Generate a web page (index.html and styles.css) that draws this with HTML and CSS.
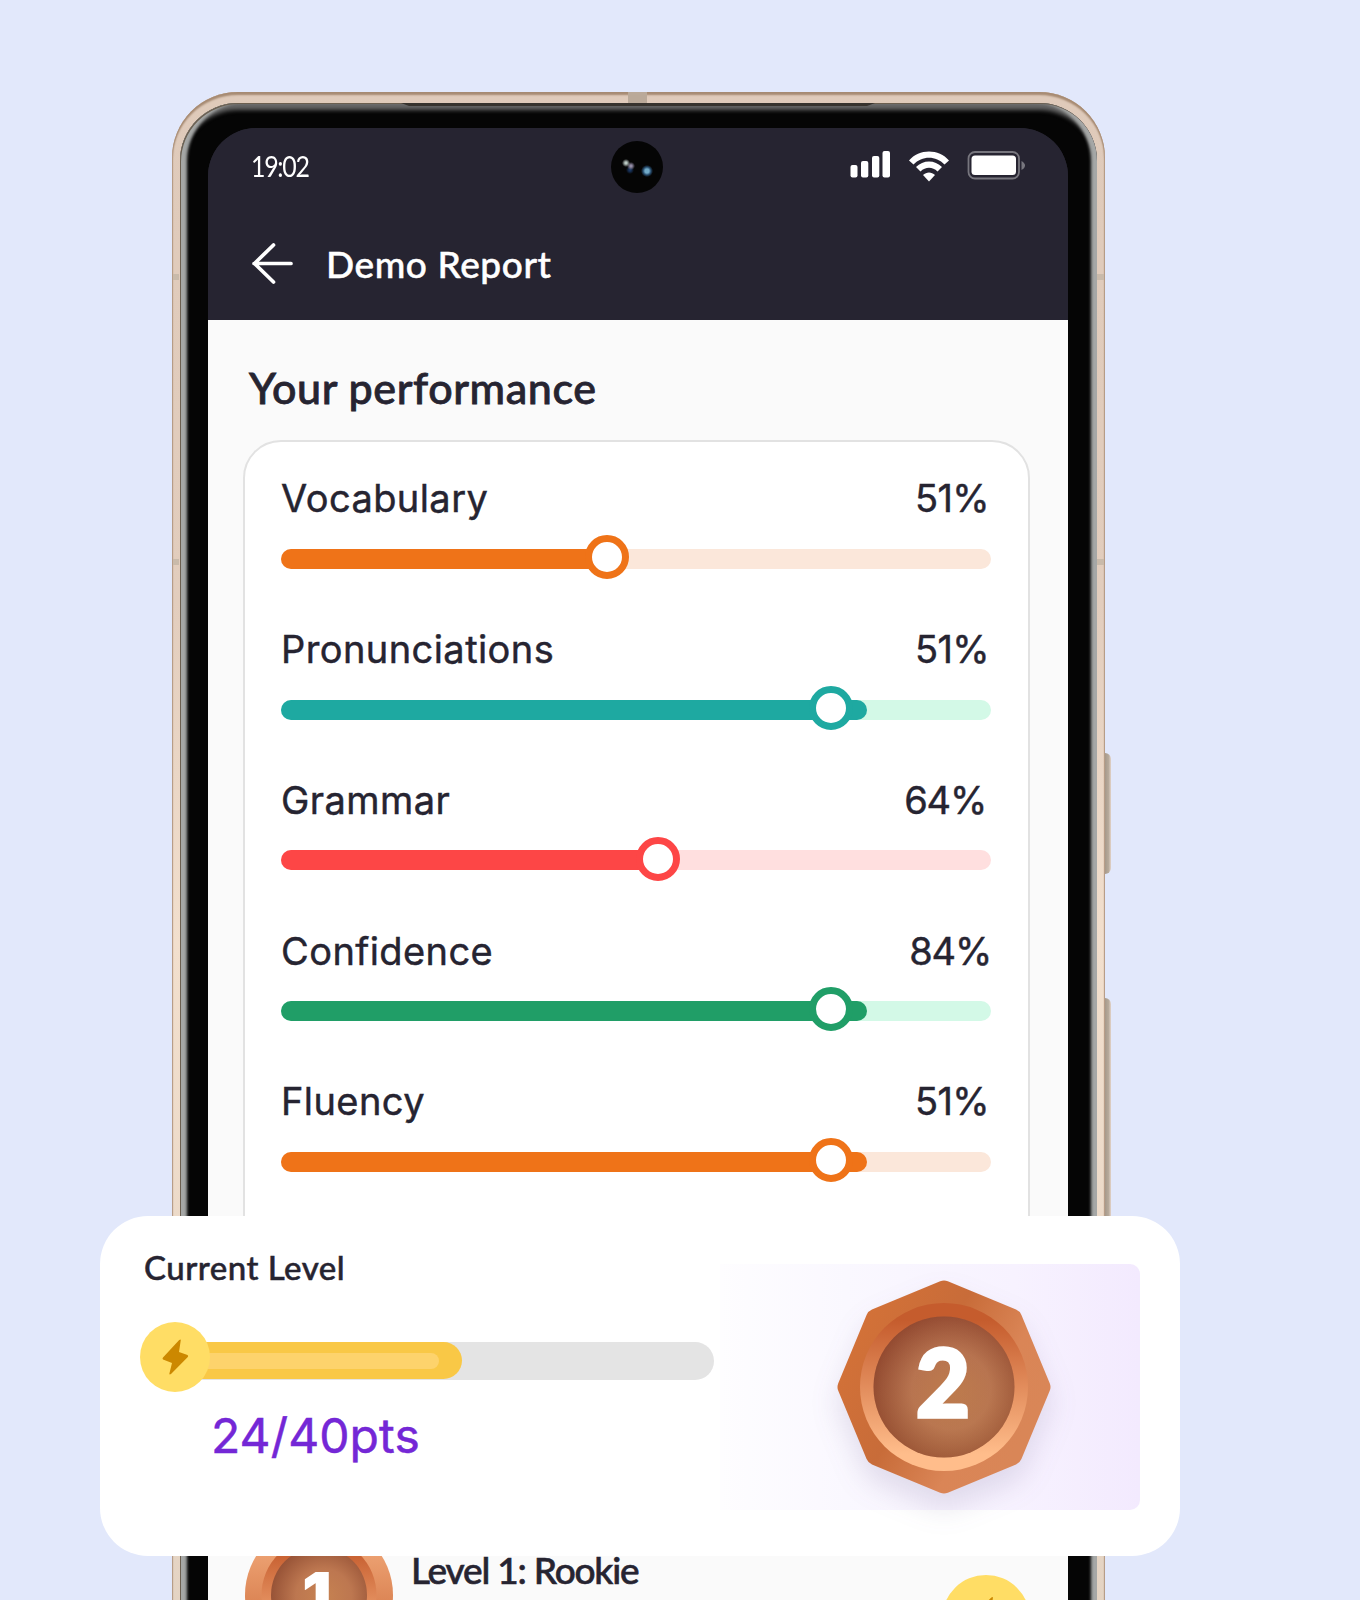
FILE: index.html
```html
<!DOCTYPE html>
<html lang="en">
<head>
<meta charset="utf-8">
<title>Demo Report</title>
<link rel="stylesheet" href="styles.css">
</head>
<body>
<main class="stage">
  <section class="phone">
    <i class="side-key key-a"></i><i class="side-key key-b"></i>
    <i class="seam seam-top"></i>
    <i class="seam seam-l1"></i><i class="seam seam-l2"></i><i class="seam seam-r1"></i><i class="seam seam-r2"></i>
    <div class="bezel">
      <svg class="speaker" viewBox="0 0 474 4"><path d="M0 0H474L466 3H8Z" fill="#37332e"/></svg>
      <div class="screen">
        <header class="top">
          <div class="status">
            <span class="time">19:02</span>
            <svg class="signals" viewBox="0 0 178 36">
              <g fill="#fff">
                <rect x=".5" y="15" width="7" height="12.5" rx="2"/><rect x="11" y="11" width="7.3" height="16.500" rx="2"/><rect x="22" y="6" width="7.300" height="21.500" rx="2"/><rect x="32.500" y="1" width="7.500" height="26.500" rx="2"/>
                <path d="M59 10.500C69-1.500 89-1.500 99 10.500L94.500 14.500C86 5.500 72 5.500 63.500 14.500Z"/>
                <path d="M66 17C73 9.500 85 9.500 92 17L87.500 21.500C82.500 16.500 75.500 16.500 70.500 21.500Z"/>
                <path d="M73 25C76.500 21.500 81.500 21.500 85 25L79 31.500Z"/>
                <rect x="121.500" y="5.500" width="44.500" height="19.500" rx="3.500"/>
              </g>
              <rect x="118.500" y="2" width="50.500" height="26.500" rx="6.500" fill="none" stroke="#77767e" stroke-width="1.800"/>
              <path d="M171.500 11V20Q175 18 175 15.500T171.500 11" fill="#77767e"/>
            </svg>
            <i class="camera"></i>
          </div>
          <div class="title">
            <svg class="back" viewBox="0 0 42 42"><path d="M39 20.500H2M21.500 2L2.500 20.500L21.500 39" fill="none" stroke="#fff" stroke-width="3.700" stroke-linecap="round" stroke-linejoin="round"/></svg>
            <h1>Demo Report</h1>
          </div>
        </header>
        <h2>Your performance</h2>
        <div class="scores">
          <div class="score orange"><div class="line"><span>Vocabulary</span><b>51%</b></div><div class="track"><i class="fill" style="width:326px"></i><i class="knob" style="left:304px"></i></div></div>
          <div class="score teal"><div class="line"><span>Pronunciations</span><b>51%</b></div><div class="track"><i class="fill" style="width:586px"></i><i class="knob" style="left:528px"></i></div></div>
          <div class="score red"><div class="line"><span>Grammar</span><b class="p64">64%</b></div><div class="track"><i class="fill" style="width:377px"></i><i class="knob" style="left:355px"></i></div></div>
          <div class="score green"><div class="line"><span>Confidence</span><b class="p84">84%</b></div><div class="track"><i class="fill" style="width:586px"></i><i class="knob" style="left:528px"></i></div></div>
          <div class="score orange"><div class="line"><span>Fluency</span><b>51%</b></div><div class="track"><i class="fill" style="width:586px"></i><i class="knob" style="left:528px"></i></div></div>
        </div>
        <div class="level-row">
          <svg class="medal-one" viewBox="0 0 150 150">
            <defs>
              <linearGradient id="o1" x2="0" y2="1"><stop stop-color="#f7b384"/><stop offset=".55" stop-color="#dc8555"/></linearGradient>
              <linearGradient id="o2" x2="0" y2="1"><stop offset=".1" stop-color="#c55c2d"/><stop offset="1" stop-color="#ffbd8b"/></linearGradient>
              <radialGradient id="o3" cx=".55" cy=".52" r=".58"><stop stop-color="#c68251"/><stop offset=".5" stop-color="#bd7750"/><stop offset="1" stop-color="#934f34"/></radialGradient>
            </defs>
            <circle cx="75" cy="75" r="74" fill="url(#o1)"/><circle cx="75" cy="75" r="57.500" fill="url(#o2)"/><circle cx="75" cy="75" r="48" fill="url(#o3)"/>
            <text x="73" y="100" text-anchor="middle" class="digit-one">1</text>
          </svg>
          <span class="level-name">Level 1: Rookie</span>
          <svg class="coin" viewBox="0 0 70 70"><circle cx="35" cy="35" r="35" fill="#ffdd65"/><path d="M40.500 18L39 30L48 33Q49 34 48 35L31 52Q30 53 30 52L32 41L23 37.500Q22 36.500 23 35.500L39 18Q40.500 17 40.500 18Z" fill="#cc8800"/></svg>
        </div>
      </div>
    </div>
  </section>

  <section class="current">
    <div class="progress">
      <h3>Current Level</h3>
      <div class="points-bar">
        <i class="points-fill"></i>
        <svg class="bolt" viewBox="0 0 70 70"><circle cx="35" cy="35" r="35" fill="#ffdd65"/><path d="M40.800 18L39 30L47.500 33Q48.700 34 47.800 35L31 52Q29.200 53 29.400 51.500L32 41L23 37.500Q22 36.500 23 35.500L39.200 18Q40.900 16.800 40.800 18Z" fill="#cc8800"/></svg>
      </div>
      <div class="points">24/40pts</div>
    </div>
    <div class="panel">
      <svg class="medal" viewBox="0 0 214 214">
        <defs>
          <linearGradient id="m1" gradientUnits="userSpaceOnUse" x1="20" y1="55" x2="190" y2="150"><stop stop-color="#d27138"/><stop offset=".4" stop-color="#c86c39"/><stop offset=".75" stop-color="#da8556"/><stop offset="1" stop-color="#d98657"/></linearGradient>
          <linearGradient id="m2" x2="0" y2="1"><stop offset=".1" stop-color="#c55c2d"/><stop offset=".9" stop-color="#ffbd8b"/></linearGradient>
          <radialGradient id="m3" cx=".55" cy=".52" r=".62"><stop stop-color="#c98654"/><stop offset=".45" stop-color="#c27e58"/><stop offset="1" stop-color="#8a4028"/></radialGradient>
          <linearGradient id="m4" x2=".3" y2="1"><stop stop-color="#83382a" stop-opacity=".2"/><stop offset="1" stop-color="#a4683a" stop-opacity=".25"/></linearGradient>
        </defs>
        <path d="M107 10.500L175.200 38.800L203.500 107L175.200 175.200L107 203.500L38.800 175.200L10.500 107L38.800 38.800Z" fill="url(#m1)" stroke="url(#m1)" stroke-width="20" stroke-linejoin="round"/>
        <circle cx="107" cy="107" r="84" fill="url(#m2)"/><circle cx="107" cy="107" r="70.500" fill="url(#m3)"/><circle cx="107" cy="107" r="70.500" fill="url(#m4)"/>
        <text x="106" y="136.500" text-anchor="middle" class="digit-two">2</text>
      </svg>
    </div>
  </section>
</main>
</body>
</html>
```
FILE: styles.css
```css
* { box-sizing: border-box; }
body { margin: 0; background: #e2e8fb; font-family: Inter, sans-serif; color: #262431; }
h1, h2, h3 { margin: 0; font-family: Lato, sans-serif; font-weight: 500; white-space: nowrap; }
.stage { position: relative; width: 1360px; height: 1600px; overflow: hidden; padding: 92px 0 0 172px; }
.phone { position: relative; width: 933px; height: 1700px; padding: 11px 8px 0; border-radius: 66px 66px 0 0; background: linear-gradient(#dfcaba, #e2cdbd 30%, #f2dfcd 50%, #e0d0c0); box-shadow: inset 0 3px 2px #a68a72, inset 1px 0 1px #b89f8a, inset -1px 0 1px #b89f8a; }
.bezel { position: relative; height: 1690px; padding: 25px 28px 0; border-radius: 58px 58px 0 0; background: #050505; box-shadow: inset 1px 1px 0 #6b5f50, inset 8px 0 3px -1px #a5a7a6, inset -7px 0 3px -1px #a5a7a6, inset 0 7px 4px #666; }
.speaker { position: absolute; top: 0; left: 221px; width: 474px; height: 4px; }
.screen { width: 860px; height: 1600px; overflow: hidden; border-radius: 48px 48px 0 0; background: linear-gradient(#262431 100px, #fafafa 100px); }
.seam { position: absolute; background: #c9baaa; }
.seam-top { left: 456px; top: 0; width: 19px; height: 11px; background: #baa999; }
.seam-l1, .seam-l2 { left: 1px; width: 6px; height: 6px; }
.seam-r1, .seam-r2 { right: 1px; width: 7px; height: 6px; }
.seam-l1, .seam-r1 { top: 182px; }
.seam-l2, .seam-r2 { top: 467px; }
.side-key { position: absolute; left: 933px; width: 6px; border-radius: 0 6px 6px 0; background: linear-gradient(90deg, #a6998b, #b7aa9b 60%, #e4d4c9); }
.key-a { top: 661px; height: 121px; }
.key-b { top: 906px; height: 260px; }

.top { height: 192px; background: #262431; }
.status { position: relative; display: flex; justify-content: space-between; padding: 22px 40px 0 43px; height: 104px; color: #fff; }
.time { font: 400 29px/32px Lato, sans-serif; letter-spacing: -1.500px; transform: scaleX(.86); transform-origin: 0 0; }
.signals { width: 178px; height: 36px; }
.camera { position: absolute; left: 403px; top: 13px; width: 52px; height: 52px; border-radius: 50%; background: radial-gradient(circle at 36px 30px, #72abc9 0 2px, #244869 4px, transparent 6px), radial-gradient(circle at 15px 22px, #bac8c3 0 1px, transparent 4px), radial-gradient(circle at 20px 25px, #928ba5 0 1px, transparent 4px), radial-gradient(circle at 19px 29px, #19355f 0 1px, transparent 4px), #050505; }
.title { display: flex; align-items: center; gap: 32px; padding-left: 44px; height: 64px; }
.back { width: 42px; height: 42px; }
h1 { font-size: 37px; line-height: 48px; color: #fff; letter-spacing: .6px; -webkit-text-stroke: .5px; }
h2 { padding: 41px 0 0 41px; height: 120px; font-size: 43px; line-height: 54px; letter-spacing: .6px; -webkit-text-stroke: .8px; }

.scores { width: 787px; height: 1000px; margin-left: 35px; padding: 32.250px 36px; border: 2px solid #e2e2e2; border-radius: 38px; background: #fff; }
.score { height: 150.75px; }
.line { display: flex; justify-content: space-between; width: 710px; height: 74.500px; line-height: 48px; font-size: 38px; letter-spacing: .42px; -webkit-text-stroke: .45px; }
.line b { font-weight: 400; padding-right: 2px; letter-spacing: -.6px; }
.line .p64 { padding-right: 5px; letter-spacing: -1.200px; }
.line .p84 { padding-right: 0; letter-spacing: -1.200px; }
.track { position: relative; width: 710px; height: 20px; border-radius: 10px; background: var(--pale); }
.fill { display: block; height: 20px; border-radius: 10px; background: var(--tone); }
.knob { position: absolute; top: -13.750px; width: 44px; height: 44px; border: 7.300px solid var(--tone); border-radius: 50%; background: #fff; }
.orange { --tone: #ef7318; --pale: #fbe7da; }
.teal { --tone: #1ea9a1; --pale: #d3f9e7; }
.red { --tone: #fd4646; --pale: #ffdfdf; }
.green { --tone: #209e67; --pale: #d3f9e7; }

.level-row { display: flex; align-items: flex-start; padding: 80px 38px 0 36px; }
.medal-one { width: 150px; height: 150px; }
.level-name { flex: 1; margin-top: 27px; padding-left: 17px; font: 500 37px/46px Lato, sans-serif; letter-spacing: -1.200px; -webkit-text-stroke: .6px; }
.coin { width: 88px; height: 88px; margin-top: 55px; }

.current { position: absolute; left: 100px; top: 1216px; width: 1080px; height: 340px; display: flex; justify-content: space-between; padding: 48px 40px 0; border-radius: 48px; background: #fff; }
.progress { width: 574px; }
h3 { height: 80px; margin-top: -18px; padding-left: 4px; font-size: 33px; line-height: 42px; letter-spacing: .5px; -webkit-text-stroke: .5px; }
.points-bar { position: relative; height: 38px; margin: 16px 0 0 20px; border-radius: 19px; background: #e4e4e4; }
.points-fill { display: block; width: 302px; height: 37px; padding: 11px 23px 10px 20px; border-radius: 19px; background: #f9c846; }
.points-fill::before { content: ""; display: block; height: 16px; border-radius: 8px; background: #fdd36c; }
.bolt { position: absolute; left: -20px; top: -20.500px; width: 70px; height: 70px; }
.points { padding: 27px 0 0 71px; font-size: 48px; line-height: 58px; color: #7427d6; letter-spacing: .1px; -webkit-text-stroke: .5px; }
.panel { flex: none; width: 420px; height: 246px; padding: 16px 0 0 116.500px; border-radius: 0 10px 10px 0; background: linear-gradient(90deg, #fefdff, #faf8ff 30%, #f7f2ff 70%, #f3eafe); }
.medal { display: block; width: 214px; height: 214px; overflow: visible; filter: drop-shadow(0 16px 14px rgba(80, 60, 110, .14)); }
.digit-two { font: 900 93px Lato, sans-serif; fill: #fff; stroke: #fff; stroke-width: 3.500px; }
.digit-one { font: 900 66px Inter, sans-serif; fill: #fff; }
```
